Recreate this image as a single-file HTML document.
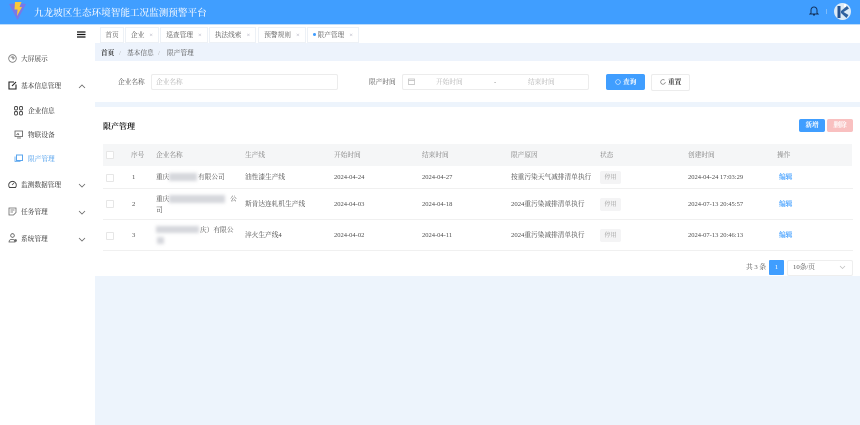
<!DOCTYPE html>
<html lang="zh">
<head>
<meta charset="utf-8">
<style>
html,body{margin:0;padding:0;background:#fff}
#root{position:relative;width:860px;height:425px;overflow:hidden;background:#edf4fc;font-family:"Liberation Serif","Noto Serif CJK SC",serif;color:#4a4a4a;font-size:6.7px;filter:blur(.36px)}
#root div,#root svg{position:absolute}
.t{white-space:nowrap;line-height:10px;margin-top:.8px}
.m{font-weight:500;color:#444}
.hd{color:#808080}
.sep{height:1px;background:#f0f0f0;left:103px;width:750px}
.cb{width:6px;height:6px;border:1px solid #e6e6e6;background:#fff;border-radius:1px;left:106px}
.tag{top:27px;height:14px;border:1px solid #edf1f6;background:#fff;line-height:15px;text-align:center;color:#555;white-space:nowrap}
.x{color:#aab;margin-left:5px}
.st{left:600px;width:21px;height:13px;background:#f4f4f5;border-radius:2px;text-align:center;line-height:14px;color:#999;font-size:6px}
.ed{left:779px;color:#409eff;font-weight:bold;white-space:nowrap;line-height:10px;margin-top:.8px}
</style>
</head>
<body>
<div id="root">
  <!-- Header -->
  <div style="left:0;top:0;width:860px;height:24px;background:#409eff"></div>
  <svg style="left:9px;top:2px" width="17" height="18" viewBox="0 0 17 18"><path d="M0 2 L5 1.500 L8.500 3 L12 1.500 L17 2 L8.500 18Z" fill="#7a78e6"/><path d="M6 0 L12.500 0 L10.500 5 L13 5 L8 14 L8.500 7.500 L5.500 7.500Z" fill="#fbc93a"/></svg>
  <div class="t" style="left:34px;top:6px;font-size:9.6px;line-height:13px;color:#f5f9ff;font-weight:500">九龙坡区生态环境智能工况监测预警平台</div>
  <svg style="left:809px;top:5px" width="10" height="11" viewBox="0 0 10 11"><path d="M2 8V5a3 3 0 0 1 6 0V8L9 9H1ZM4 10h2" fill="none" stroke="#12305a" stroke-width="1"/></svg>
  <div style="left:826px;top:9px;width:1px;height:5px;background:#7dbcfb"></div>
  <svg style="left:834px;top:3px" width="17" height="17" viewBox="0 0 17 17"><circle cx="8.500" cy="8.500" r="8.500" fill="#dcebf7"/><path d="M3.500 3H6.500V15H3.500Z" fill="#24528f"/><path d="M7 8L13 3L15 5.500L9.500 9L14.500 12L12.500 15L7 10Z" fill="#2f629f"/><path d="M10 1H12V4H10Z" fill="#fff"/></svg>

  <!-- Sidebar -->
  <div style="left:0;top:24px;width:95px;height:401px;background:#fff"></div>
  <div style="left:0;top:24px;width:860px;height:1px;background:#bcdcfb"></div>
  <svg style="left:77px;top:31px" width="9" height="7" viewBox="0 0 9 7"><path d="M0 1H8.500M0 3.500H8.500M0 6H8.500" stroke="#111" stroke-width="1.200"/></svg>

  <svg style="left:8px;top:54px" width="9" height="9" viewBox="0 0 9 9"><circle cx="4.500" cy="4.500" r="3.800" fill="none" stroke="#777" stroke-width=".8"/><path d="M2 3l2 1 1 2 2-2-2-2z" fill="#999"/></svg>
  <div class="t m" style="left:21px;top:54px">大屏展示</div>

  <svg style="left:8px;top:81px" width="9" height="9" viewBox="0 0 9 9"><path d="M6 1H1V8H8V3.500" fill="none" stroke="#222" stroke-width="1.100"/><path d="M4 5L8 1" stroke="#222" stroke-width="1.100"/></svg>
  <div class="t m" style="left:21px;top:81px">基本信息管理</div>
  <svg style="left:78px;top:84px" width="8" height="5" viewBox="0 0 8 5"><path d="M1 4L4 1L7 4" fill="none" stroke="#666" stroke-width=".8"/></svg>

  <svg style="left:14px;top:106px" width="9" height="10" viewBox="0 0 9 10"><g fill="none" stroke="#444" stroke-width=".9"><rect x=".5" y=".5" width="3" height="3.500" rx="1.200"/><rect x="5.500" y=".5" width="3" height="3.500" rx="1.200"/><rect x=".5" y="5.500" width="3" height="3.500" rx="1.200"/><rect x="5.500" y="5.500" width="3" height="3.500" rx="1.200"/></g></svg>
  <div class="t m" style="left:28px;top:106px">企业信息</div>

  <svg style="left:14px;top:130px" width="10" height="9" viewBox="0 0 10 9"><path d="M1 1H8.500V6.500H1ZM3 8H7M2.500 5L4 3.500L5 5" fill="none" stroke="#555" stroke-width=".8"/></svg>
  <div class="t m" style="left:28px;top:130px">物联设备</div>

  <svg style="left:14px;top:154px" width="10" height="9" viewBox="0 0 10 9"><path d="M2.500 1H8.500V6.500H2.500Z" fill="none" stroke="#5aa5ee" stroke-width="1"/><path d="M1 2.500V7.500H6.500" fill="none" stroke="#5aa5ee" stroke-width=".8"/></svg>
  <div class="t" style="left:28px;top:154px;color:#5aa5ee;font-weight:500">限产管理</div>

  <svg style="left:8px;top:180px" width="9" height="9" viewBox="0 0 9 9"><path d="M1.500 7.500A3.800 3.800 0 1 1 7.500 7.500Z" fill="none" stroke="#444" stroke-width=".9"/><path d="M4 5L6 3" stroke="#444" stroke-width=".8"/></svg>
  <div class="t m" style="left:21px;top:180px">监测数据管理</div>
  <svg style="left:78px;top:183px" width="8" height="5" viewBox="0 0 8 5"><path d="M1 1L4 4L7 1" fill="none" stroke="#666" stroke-width=".8"/></svg>

  <svg style="left:8px;top:207px" width="9" height="9" viewBox="0 0 9 9"><path d="M1 1H8V5.500L5.500 8H1ZM2.500 3H6.500M2.500 5H5" fill="none" stroke="#666" stroke-width=".8"/></svg>
  <div class="t m" style="left:21px;top:207px">任务管理</div>
  <svg style="left:78px;top:210px" width="8" height="5" viewBox="0 0 8 5"><path d="M1 1L4 4L7 1" fill="none" stroke="#666" stroke-width=".8"/></svg>

  <svg style="left:8px;top:233px" width="10" height="10" viewBox="0 0 10 10"><circle cx="4.500" cy="2.500" r="1.800" fill="none" stroke="#555" stroke-width=".8"/><path d="M1 9C1 5.500 7 5.500 7 9Z" fill="none" stroke="#555" stroke-width=".8"/><circle cx="7.500" cy="7.500" r="1.400" fill="#666"/></svg>
  <div class="t m" style="left:21px;top:234px">系统管理</div>
  <svg style="left:78px;top:237px" width="8" height="5" viewBox="0 0 8 5"><path d="M1 1L4 4L7 1" fill="none" stroke="#666" stroke-width=".8"/></svg>

  <!-- Tags bar -->
  <div style="left:95px;top:25px;width:765px;height:18px;background:#fff"></div>
  <div class="tag" style="left:100px;width:22px">首页</div>
  <div class="tag" style="left:125px;width:32px">企业<span class="x">×</span></div>
  <div class="tag" style="left:160px;width:46px">巡查管理<span class="x">×</span></div>
  <div class="tag" style="left:209px;width:45px">执法线索<span class="x">×</span></div>
  <div class="tag" style="left:258px;width:46px">预警规则<span class="x">×</span></div>
  <div class="tag" style="left:307px;width:50px"><span style="display:inline-block;width:3.500px;height:3.500px;background:#409eff;border-radius:50%;vertical-align:1px;margin-right:1px"></span>限产管理<span class="x">×</span></div>

  <!-- Breadcrumb -->
  <div style="left:95px;top:43px;width:765px;height:18px;background:#edf3fc"></div>
  <div class="t" style="left:101px;top:48px;color:#333;font-weight:bold">首页</div>
  <div class="t" style="left:119px;top:48px;color:#aaa">/</div>
  <div class="t" style="left:127px;top:48px;color:#555">基本信息</div>
  <div class="t" style="left:158px;top:48px;color:#aaa">/</div>
  <div class="t" style="left:167px;top:48px;color:#555">限产管理</div>

  <!-- Search panel -->
  <div style="left:95px;top:61px;width:765px;height:41px;background:#fff"></div>
  <div class="t" style="left:118px;top:77px;color:#555">企业名称</div>
  <div style="left:151px;top:74px;width:185px;height:14px;border:1px solid #ececec;border-radius:2px;background:#fff"></div>
  <div class="t" style="left:156px;top:77px;color:#b5b5b5">企业名称</div>
  <div class="t" style="left:369px;top:77px;color:#555">限产时间</div>
  <div style="left:402px;top:74px;width:185px;height:14px;border:1px solid #ececec;border-radius:2px;background:#fff"></div>
  <svg style="left:408px;top:78px" width="7" height="7" viewBox="0 0 7 7"><path d="M.5 1H6.500V6.500H.5ZM.5 2.500H6.500" fill="none" stroke="#bbb" stroke-width=".7"/></svg>
  <div class="t" style="left:436px;top:77px;color:#b5b5b5">开始时间</div>
  <div class="t" style="left:494px;top:77px;color:#888">-</div>
  <div class="t" style="left:528px;top:77px;color:#b5b5b5">结束时间</div>

  <div style="left:606px;top:74px;width:39px;height:16px;background:#409eff;border-radius:2px"></div>
  <svg style="left:615px;top:79px" width="6" height="6" viewBox="0 0 6 6"><circle cx="3" cy="3" r="2.300" fill="none" stroke="#dcecff" stroke-width=".7"/></svg>
  <div class="t" style="left:623px;top:77px;color:#fff;font-weight:bold">查询</div>
  <div style="left:651px;top:74px;width:37px;height:15px;border:1px solid #ececec;border-radius:2px;background:#fff"></div>
  <svg style="left:660px;top:79px" width="6" height="6" viewBox="0 0 6 6"><path d="M5.300 3A2.300 2.300 0 1 1 4.500 1.200" fill="none" stroke="#777" stroke-width=".7"/></svg>
  <div class="t" style="left:668px;top:77px;color:#444;font-weight:bold">重置</div>

  <!-- Table panel -->
  <div style="left:95px;top:107px;width:765px;height:169px;background:#fff"></div>
  <div class="t" style="left:103px;top:121px;font-size:8px;font-weight:bold;color:#222">限产管理</div>
  <div style="left:799px;top:119px;width:26px;height:13px;background:#409eff;border-radius:2px;color:#fff;text-align:center;line-height:14px;font-weight:bold">新增</div>
  <div style="left:827px;top:119px;width:26px;height:13px;background:#f9c0c0;border-radius:2px;color:#fff;text-align:center;line-height:14px;font-weight:bold">删除</div>

  <div style="left:103px;top:144px;width:749px;height:22px;background:#f5f6f7"></div>
  <div class="cb" style="top:151px"></div>
  <div class="t hd" style="left:131px;top:150px">序号</div>
  <div class="t hd" style="left:156px;top:150px">企业名称</div>
  <div class="t hd" style="left:245px;top:150px">生产线</div>
  <div class="t hd" style="left:334px;top:150px">开始时间</div>
  <div class="t hd" style="left:422px;top:150px">结束时间</div>
  <div class="t hd" style="left:511px;top:150px">限产原因</div>
  <div class="t hd" style="left:600px;top:150px">状态</div>
  <div class="t hd" style="left:688px;top:150px">创建时间</div>
  <div class="t hd" style="left:777px;top:150px">操作</div>

  <!-- Row 1 -->
  <div class="cb" style="top:174px"></div>
  <div class="t" style="left:132px;top:172px">1</div>
  <div class="t" style="left:156px;top:172px">重庆</div>
  <div style="left:169px;top:173px;width:28px;height:8px;background:#d5d7dc;filter:blur(1.500px)"></div>
  <div class="t" style="left:198px;top:172px">有限公司</div>
  <div class="t" style="left:245px;top:172px">油性漆生产线</div>
  <div class="t" style="left:334px;top:172px;font-size:6.500px">2024-04-24</div>
  <div class="t" style="left:422px;top:172px;font-size:6.500px">2024-04-27</div>
  <div class="t" style="left:511px;top:172px">按重污染天气减排清单执行</div>
  <div class="st" style="top:171px">停用</div>
  <div class="t" style="left:688px;top:172px;font-size:6.500px">2024-04-24 17:03:29</div>
  <div class="ed" style="top:172px">编辑</div>
  <div class="sep" style="top:188px"></div>

  <!-- Row 2 -->
  <div class="cb" style="top:200px"></div>
  <div class="t" style="left:132px;top:199px">2</div>
  <div class="t" style="left:156px;top:194px">重庆</div>
  <div style="left:169px;top:195px;width:56px;height:8px;background:#d5d7dc;filter:blur(1.500px)"></div>
  <div class="t" style="left:230px;top:194px">公</div>
  <div class="t" style="left:156px;top:205px">司</div>
  <div class="t" style="left:245px;top:199px">斯肯达连轧机生产线</div>
  <div class="t" style="left:334px;top:199px;font-size:6.500px">2024-04-03</div>
  <div class="t" style="left:422px;top:199px;font-size:6.500px">2024-04-18</div>
  <div class="t" style="left:511px;top:199px">2024重污染减排清单执行</div>
  <div class="st" style="top:198px">停用</div>
  <div class="t" style="left:688px;top:199px;font-size:6.500px">2024-07-13 20:45:57</div>
  <div class="ed" style="top:199px">编辑</div>
  <div class="sep" style="top:219px"></div>

  <!-- Row 3 -->
  <div class="cb" style="top:232px"></div>
  <div class="t" style="left:132px;top:230px">3</div>
  <div style="left:156px;top:226px;width:43px;height:7px;background:#d5d7dc;filter:blur(1.500px)"></div>
  <div class="t" style="left:200px;top:225px">庆）有限公</div>
  <div style="left:157px;top:237px;width:7px;height:7px;background:#d5d7dc;filter:blur(1.500px)"></div>
  <div class="t" style="left:245px;top:230px">淬火生产线4</div>
  <div class="t" style="left:334px;top:230px;font-size:6.500px">2024-04-02</div>
  <div class="t" style="left:422px;top:230px;font-size:6.500px">2024-04-11</div>
  <div class="t" style="left:511px;top:230px">2024重污染减排清单执行</div>
  <div class="st" style="top:229px">停用</div>
  <div class="t" style="left:688px;top:230px;font-size:6.500px">2024-07-13 20:46:13</div>
  <div class="ed" style="top:230px">编辑</div>
  <div class="sep" style="top:250px"></div>

  <!-- Pagination -->
  <div class="t" style="left:746px;top:262px;color:#555">共 3 条</div>
  <div style="left:769px;top:260px;width:15px;height:15px;background:#409eff;border-radius:1px;color:#fff;text-align:center;line-height:16px">1</div>
  <div style="left:787px;top:260px;width:64px;height:14px;border:1px solid #eee;border-radius:2px;background:#fff"></div>
  <div class="t" style="left:793px;top:262px;color:#555">10条/页</div>
  <svg style="left:839px;top:265px" width="7" height="5" viewBox="0 0 7 5"><path d="M1 1L3.500 3.500L6 1" fill="none" stroke="#bbb" stroke-width=".7"/></svg>
</div>
</body>
</html>
